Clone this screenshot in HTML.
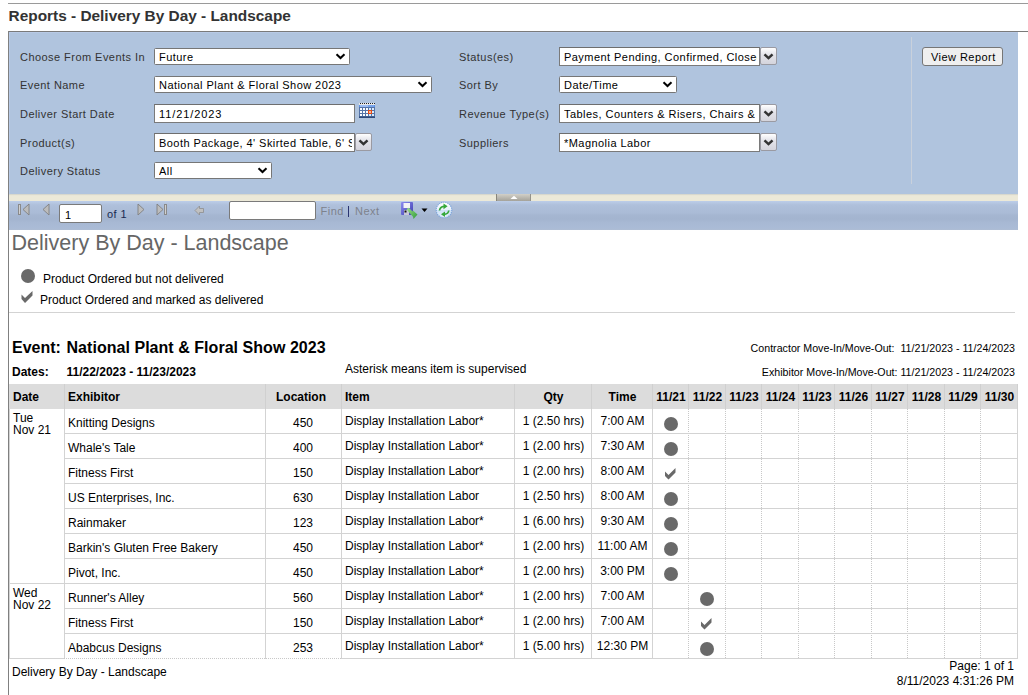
<!DOCTYPE html>
<html><head><meta charset="utf-8">
<style>
*{box-sizing:border-box;margin:0;padding:0}
html,body{width:1028px;height:695px;overflow:hidden;background:#fff}
body{position:relative;font-family:"Liberation Sans",sans-serif;color:#000}
.a{position:absolute}
.t{position:absolute;white-space:nowrap;line-height:1}
.lbl{font-size:11px;color:#333;letter-spacing:0.45px}
.sel{position:absolute;background:#fff;border:1px solid #767676;border-radius:1.5px}
.sel span{position:absolute;left:4px;top:2px;font-size:11px;letter-spacing:0.45px;line-height:13px;color:#000;white-space:nowrap;overflow:hidden}
.chev{position:absolute;width:11px;height:7px}
.inp{position:absolute;background:#fff;border:1px solid #7a7a7a;border-top-color:#6e6e6e}
.inp span{position:absolute;left:4px;top:3px;font-size:11px;letter-spacing:0.45px;line-height:13px;color:#000;white-space:nowrap;overflow:hidden}
.ddb{position:absolute;width:17px;height:18px;border:1px solid #9a9aa2;border-radius:2px;background:linear-gradient(#fff,#e4e4ea 40%,#d4d4dc)}
.r{font-size:12px}
.hdr{position:absolute;top:384px;height:24px;background:#dcdcdc}
</style></head>
<body>
<!-- top line -->
<div class="a" style="left:8px;top:3px;width:1020px;height:1px;background:#9a9a9a"></div>
<div class="t" style="left:8.6px;top:7.5px;font-size:15.4px;font-weight:bold;color:#333;letter-spacing:0px">Reports - Delivery By Day - Landscape</div>

<!-- outer frame -->
<div class="a" style="left:8px;top:31px;width:1020px;height:1px;background:#7a7a7a"></div>
<div class="a" style="left:8px;top:31px;width:1px;height:664px;background:#808080"></div>

<!-- parameter panel -->
<div class="a" style="left:9px;top:32px;width:1009px;height:162px;background:#b0c4de"></div>
<div class="a" style="left:911px;top:37px;width:1px;height:147px;background:#c9d1dc"></div>
<div class="a" style="left:9px;top:32px;width:1009px;height:1px;background:#b8cae6"></div>
<div class="a" style="left:9px;top:32px;width:1px;height:162px;background:#b8cae6"></div>

<!-- left labels -->
<div class="t lbl" style="left:20px;top:52px">Choose From Events In</div>
<div class="t lbl" style="left:20px;top:80px">Event Name</div>
<div class="t lbl" style="left:20px;top:109px">Deliver Start Date</div>
<div class="t lbl" style="left:20px;top:138px">Product(s)</div>
<div class="t lbl" style="left:20px;top:166px">Delivery Status</div>

<!-- right labels -->
<div class="t lbl" style="left:459px;top:52px">Status(es)</div>
<div class="t lbl" style="left:459px;top:80px">Sort By</div>
<div class="t lbl" style="left:459px;top:109px">Revenue Type(s)</div>
<div class="t lbl" style="left:459px;top:138px">Suppliers</div>

<!-- left controls -->
<div class="sel" style="left:154px;top:48px;width:196px;height:17px"><span>Future</span>
<svg class="chev" style="left:180px;top:4px" viewBox="0 0 11 7"><path d="M1.5 1.2 L5.5 5 L9.5 1.2" fill="none" stroke="#000" stroke-width="2"/></svg></div>
<div class="sel" style="left:154px;top:76px;width:278px;height:17px"><span>National Plant &amp; Floral Show 2023</span>
<svg class="chev" style="left:262px;top:4px" viewBox="0 0 11 7"><path d="M1.5 1.2 L5.5 5 L9.5 1.2" fill="none" stroke="#000" stroke-width="2"/></svg></div>
<div class="inp" style="left:154px;top:104px;width:201px;height:19px"><span style="letter-spacing:0.9px">11/21/2023</span></div>
<svg class="a" style="left:359px;top:103px" width="16" height="15" viewBox="0 0 16 15">
<rect x="0" y="0" width="16" height="2" fill="#e8e8e8"/>
<path d="M1 0.5h1M3 0.5h1M5 0.5h1M7 0.5h1M9 0.5h1M11 0.5h1M13 0.5h1M15 0.5h1" stroke="#222" stroke-width="1.1"/>
<rect x="0" y="2" width="16" height="13" fill="#5574a8"/>
<rect x="0" y="2" width="16" height="2" fill="#5d92e6"/>
<rect x="1" y="2.5" width="8" height="1" fill="#d8e6ff"/>
<rect x="9" y="2.5" width="6" height="1" fill="#8fb4f0"/>
<g fill="#fbfdff"><rect x="1" y="5" width="2" height="2"/><rect x="4" y="5" width="2" height="2"/><rect x="7" y="5" width="2" height="2"/>
<rect x="1" y="8" width="2" height="2"/><rect x="4" y="8" width="2" height="2"/><rect x="7" y="8" width="2" height="2"/>
<rect x="1" y="11" width="2" height="2"/><rect x="4" y="11" width="2" height="2"/><rect x="7" y="11" width="2" height="2"/></g>
<g fill="#dbeafa"><rect x="10" y="5" width="2" height="2"/><rect x="13" y="5" width="2" height="2"/><rect x="13" y="8" width="2" height="2"/>
<rect x="10" y="11" width="2" height="2"/><rect x="13" y="11" width="2" height="2"/></g>
<rect x="9.6" y="7.6" width="2.8" height="2.8" fill="#eef6ff" stroke="#e84a10" stroke-width="1.2"/>
<rect x="0" y="13.5" width="16" height="1.5" fill="#2f4a7a"/>
</svg>
<div class="inp" style="left:154px;top:133px;width:201px;height:19px"><span style="width:193px">Booth Package, 4' Skirted Table, 6' S</span></div>
<div class="ddb" style="left:355px;top:133px"><svg class="chev" style="left:2px;top:5px" viewBox="0 0 11 7"><path d="M1.5 1.3 L5.5 5.1 L9.5 1.3" fill="none" stroke="#333" stroke-width="2.5"/></svg></div>
<div class="sel" style="left:154px;top:162px;width:118px;height:17px"><span>All</span>
<svg class="chev" style="left:102px;top:4px" viewBox="0 0 11 7"><path d="M1.5 1.2 L5.5 5 L9.5 1.2" fill="none" stroke="#000" stroke-width="2"/></svg></div>

<!-- right controls -->
<div class="inp" style="left:559px;top:47px;width:201px;height:19px"><span style="width:193px">Payment Pending, Confirmed, Closed</span></div>
<div class="ddb" style="left:760px;top:47px"><svg class="chev" style="left:2px;top:5px" viewBox="0 0 11 7"><path d="M1.5 1.3 L5.5 5.1 L9.5 1.3" fill="none" stroke="#333" stroke-width="2.5"/></svg></div>
<div class="sel" style="left:559px;top:76px;width:118px;height:17px"><span>Date/Time</span>
<svg class="chev" style="left:102px;top:4px" viewBox="0 0 11 7"><path d="M1.5 1.2 L5.5 5 L9.5 1.2" fill="none" stroke="#000" stroke-width="2"/></svg></div>
<div class="inp" style="left:559px;top:104px;width:201px;height:19px"><span>Tables, Counters &amp; Risers, Chairs &amp;</span></div>
<div class="ddb" style="left:760px;top:104px"><svg class="chev" style="left:2px;top:5px" viewBox="0 0 11 7"><path d="M1.5 1.3 L5.5 5.1 L9.5 1.3" fill="none" stroke="#333" stroke-width="2.5"/></svg></div>
<div class="inp" style="left:559px;top:133px;width:201px;height:19px"><span>*Magnolia Labor</span></div>
<div class="ddb" style="left:760px;top:133px"><svg class="chev" style="left:2px;top:5px" viewBox="0 0 11 7"><path d="M1.5 1.3 L5.5 5.1 L9.5 1.3" fill="none" stroke="#333" stroke-width="2.5"/></svg></div>

<!-- View report button -->
<div class="a" style="left:922px;top:47px;width:81px;height:19px;background:#efefef;border:1px solid #767676;border-radius:3px"></div>
<div class="t" style="left:931px;top:52px;font-size:11px;letter-spacing:0.45px;color:#000">View Report</div>

<!-- splitter strip -->
<div class="a" style="left:9px;top:194px;width:1009px;height:7px;background:linear-gradient(#c9ccc6 0px,#e6e4d6 1px,#ece9d8 2px)"></div>
<div class="a" style="left:496px;top:194px;width:35px;height:7px;background:linear-gradient(#d2d0c8,#a4a29a);border-left:1px solid #88867c;border-right:1px solid #94928a"></div>
<svg class="a" style="left:510px;top:195px" width="8" height="5"><path d="M0.5 4 L4 0.8 L7.5 4Z" fill="#fff"/></svg>

<!-- toolbar -->
<div class="a" style="left:9px;top:201px;width:1009px;height:29px;background:linear-gradient(#bdcee9 0px,#b6c7e2 2px,#afc0db 4px,#acbdd8 8px,#aabbd6 12px,#a5b6d1 14px,#a3b4cf 18px,#a7b8d3 21px,#aabbd6 27px,#aebdd4 29px)"></div>


<!-- toolbar icons -->
<svg class="a" style="left:17px;top:203px" width="14" height="13" viewBox="0 0 14 13">
<rect x="1" y="1" width="3" height="11" fill="#8a8a8a"/><rect x="2" y="2" width="1" height="9" fill="#d0d0d0"/>
<path d="M12 1 L6 6.5 L12 12Z" fill="#bcbcbc" stroke="#808080" stroke-width="0.9"/>
</svg>
<svg class="a" style="left:41px;top:203px" width="10" height="13" viewBox="0 0 10 13">
<path d="M8 1 L2 6.5 L8 12Z" fill="#bcbcbc" stroke="#808080" stroke-width="0.9"/>
</svg>
<div class="inp" style="left:59px;top:204px;width:43px;height:19px;border-color:#7a7a7a;border-radius:2px"><span style="left:5px;top:4px;font-size:11px;letter-spacing:0">1</span></div>
<div class="t" style="left:107px;top:209px;font-size:11px;letter-spacing:0.45px;color:#1a2a50">of 1</div>
<svg class="a" style="left:136px;top:203px" width="10" height="13" viewBox="0 0 10 13">
<path d="M2 1 L8 6.5 L2 12Z" fill="#bcbcbc" stroke="#808080" stroke-width="0.9"/>
</svg>
<svg class="a" style="left:155px;top:203px" width="14" height="13" viewBox="0 0 14 13">
<path d="M2 1 L8 6.5 L2 12Z" fill="#bcbcbc" stroke="#808080" stroke-width="0.9"/>
<rect x="9" y="1" width="3" height="11" fill="#8a8a8a"/><rect x="10" y="2" width="1" height="9" fill="#d0d0d0"/>
</svg>
<svg class="a" style="left:194px;top:204px" width="11" height="13" viewBox="0 0 11 13">
<path d="M1 6.5 L5.5 2 L5.5 4.5 L9.5 4.5 L9.5 8.5 L5.5 8.5 L5.5 11Z" fill="#c0c0c0" stroke="#8e8e8e" stroke-width="0.8"/>
</svg>
<div class="inp" style="left:229px;top:201px;width:87px;height:19px;border-color:#7a7a7a;border-radius:2px"></div>
<div class="t" style="left:320.5px;top:206px;font-size:11px;letter-spacing:0.5px;color:#7d828c">Find</div>
<div class="a" style="left:348px;top:206px;width:1px;height:11px;background:#2a3470"></div>
<div class="t" style="left:355px;top:206px;font-size:11px;letter-spacing:0.5px;color:#7d828c">Next</div>
<svg class="a" style="left:400px;top:201px" width="19" height="19" viewBox="0 0 19 19">
<defs><linearGradient id="fg" x1="0" y1="0" x2="1" y2="1"><stop offset="0" stop-color="#8c8cf0"/><stop offset="1" stop-color="#3e3eb0"/></linearGradient>
<linearGradient id="gg" x1="0" y1="0" x2="1" y2="1"><stop offset="0" stop-color="#9ee08a"/><stop offset="1" stop-color="#2f9a3a"/></linearGradient></defs>
<rect x="1" y="1" width="12" height="13" rx="1" fill="url(#fg)"/>
<rect x="3.5" y="2" width="6.5" height="5" fill="#f2f2f6"/>
<rect x="4" y="9" width="5" height="5" fill="#c8c8d8"/>
<rect x="4.5" y="9.5" width="2" height="2" fill="#111"/>
<path d="M6.5 8 L8.8 6.8 L12.5 10.5 L13 9.5 L17.5 13.5 L13.5 18 L13 15.8 L9.5 12 Z" fill="url(#gg)"/>
</svg>
<svg class="a" style="left:421px;top:208px" width="7" height="5" viewBox="0 0 7 5"><path d="M0.5 0.5 L6.5 0.5 L3.5 4Z" fill="#000"/></svg>
<svg class="a" style="left:435px;top:201px" width="19" height="19" viewBox="0 0 19 19">
<defs><linearGradient id="rg" x1="0" y1="0" x2="0" y2="1"><stop offset="0" stop-color="#fdfeff"/><stop offset="0.48" stop-color="#e8f1fc"/><stop offset="0.52" stop-color="#cfe2f7"/><stop offset="1" stop-color="#e3eefb"/></linearGradient></defs>
<circle cx="9" cy="9" r="7.8" fill="url(#rg)" stroke="#7aa3dc" stroke-width="1.1" stroke-dasharray="1.2 0.9"/>
<path d="M4.5 9.5 Q5 5.8 9 5.4" stroke="#35a83a" stroke-width="1.7" fill="none"/>
<path d="M8.5 2.6 L12.6 5.3 L8.5 8.2Z" fill="#35a83a"/>
<path d="M13.8 9.5 Q13.3 13 9.5 13.3" stroke="#35a83a" stroke-width="1.7" fill="none"/>
<path d="M10 10.5 L6 13.3 L10 16Z" fill="#35a83a"/>
</svg>
<!-- report -->
<div class="t" style="left:11.5px;top:233px;font-size:21.5px;color:#666">Delivery By Day - Landscape</div>
<div class="a" style="left:21px;top:269px;width:14px;height:14px;border-radius:50%;background:#696969"></div>
<div class="t r" style="left:43px;top:273px">Product Ordered but not delivered</div>
<svg class="a" style="left:20px;top:290px" width="14" height="14" viewBox="0 0 14 14"><path d="M1.5 4.5 L5 8 L12.5 1 L12.5 5.5 L5 13 L1.5 9Z" fill="#696969"/></svg>
<div class="t r" style="left:40px;top:294px">Product Ordered and marked as delivered</div>
<div class="a" style="left:9px;top:312px;width:1006px;height:1px;background:#d3d3d3"></div>
<div class="t" style="left:12px;top:340px;font-size:16px;font-weight:bold">Event:</div>
<div class="t" style="left:66.5px;top:340px;font-size:16px;font-weight:bold;letter-spacing:0.04px">National Plant &amp; Floral Show 2023</div>
<div class="t" style="left:12px;top:366px;font-size:12px;font-weight:bold">Dates:</div>
<div class="t" style="left:66.5px;top:366px;font-size:12px;font-weight:bold">11/22/2023 - 11/23/2023</div>
<div class="t r" style="left:345px;top:363px">Asterisk means item is supervised</div>
<div class="t" style="right:13px;top:343px;font-size:10.67px;white-space:pre">Contractor Move-In/Move-Out:  11/21/2023 - 11/24/2023</div>
<div class="t" style="right:13px;top:367px;font-size:10.67px;white-space:pre">Exhibitor Move-In/Move-Out: 11/21/2023 - 11/24/2023</div>
<div class="a" style="left:9px;top:384px;width:1009px;height:25px;background:#dcdcdc"></div>
<div class="a" style="left:64px;top:384px;width:1px;height:25px;background:#d0d0d0"></div>
<div class="a" style="left:265px;top:384px;width:1px;height:25px;background:#d0d0d0"></div>
<div class="a" style="left:341px;top:384px;width:1px;height:25px;background:#d0d0d0"></div>
<div class="a" style="left:514px;top:384px;width:1px;height:25px;background:#d0d0d0"></div>
<div class="a" style="left:591px;top:384px;width:1px;height:25px;background:#d0d0d0"></div>
<div class="a" style="left:652px;top:384px;width:1px;height:25px;background:#d0d0d0"></div>
<div class="a" style="left:688px;top:384px;width:1px;height:25px;background:#d0d0d0"></div>
<div class="a" style="left:725px;top:384px;width:1px;height:25px;background:#d0d0d0"></div>
<div class="a" style="left:761px;top:384px;width:1px;height:25px;background:#d0d0d0"></div>
<div class="a" style="left:798px;top:384px;width:1px;height:25px;background:#d0d0d0"></div>
<div class="a" style="left:834px;top:384px;width:1px;height:25px;background:#d0d0d0"></div>
<div class="a" style="left:871px;top:384px;width:1px;height:25px;background:#d0d0d0"></div>
<div class="a" style="left:907px;top:384px;width:1px;height:25px;background:#d0d0d0"></div>
<div class="a" style="left:944px;top:384px;width:1px;height:25px;background:#d0d0d0"></div>
<div class="a" style="left:980px;top:384px;width:1px;height:25px;background:#d0d0d0"></div>
<div class="a" style="left:1017px;top:384px;width:1px;height:25px;background:#d0d0d0"></div>
<div class="t" style="left:13px;top:391px;font-size:12px;font-weight:bold">Date</div>
<div class="t" style="left:68px;top:391px;font-size:12px;font-weight:bold">Exhibitor</div>
<div class="t" style="left:263px;width:76px;text-align:center;top:391px;font-size:12px;font-weight:bold">Location</div>
<div class="t" style="left:345px;top:391px;font-size:12px;font-weight:bold">Item</div>
<div class="t" style="left:515px;width:77px;text-align:center;top:391px;font-size:12px;font-weight:bold">Qty</div>
<div class="t" style="left:592px;width:61px;text-align:center;top:391px;font-size:12px;font-weight:bold">Time</div>
<div class="t" style="left:653px;width:36px;text-align:center;top:391px;font-size:12px;font-weight:bold">11/21</div>
<div class="t" style="left:689px;width:37px;text-align:center;top:391px;font-size:12px;font-weight:bold">11/22</div>
<div class="t" style="left:726px;width:36px;text-align:center;top:391px;font-size:12px;font-weight:bold">11/23</div>
<div class="t" style="left:762px;width:37px;text-align:center;top:391px;font-size:12px;font-weight:bold">11/24</div>
<div class="t" style="left:799px;width:36px;text-align:center;top:391px;font-size:12px;font-weight:bold">11/23</div>
<div class="t" style="left:835px;width:37px;text-align:center;top:391px;font-size:12px;font-weight:bold">11/26</div>
<div class="t" style="left:872px;width:36px;text-align:center;top:391px;font-size:12px;font-weight:bold">11/27</div>
<div class="t" style="left:908px;width:37px;text-align:center;top:391px;font-size:12px;font-weight:bold">11/28</div>
<div class="t" style="left:945px;width:36px;text-align:center;top:391px;font-size:12px;font-weight:bold">11/29</div>
<div class="t" style="left:981px;width:37px;text-align:center;top:391px;font-size:12px;font-weight:bold">11/30</div>
<div class="a" style="left:64px;top:409px;width:1px;height:250px;background:#d3d3d3"></div>
<div class="a" style="left:265px;top:409px;width:1px;height:250px;background:#d3d3d3"></div>
<div class="a" style="left:341px;top:409px;width:1px;height:250px;background:#d3d3d3"></div>
<div class="a" style="left:514px;top:409px;width:1px;height:250px;background:#d3d3d3"></div>
<div class="a" style="left:591px;top:409px;width:1px;height:250px;background:#d3d3d3"></div>
<div class="a" style="left:652px;top:409px;width:1px;height:250px;background:#d3d3d3"></div>
<div class="a" style="left:1017px;top:409px;width:1px;height:250px;background:#d3d3d3"></div>
<div class="a" style="left:688px;top:409px;width:1px;height:250px;background-image:linear-gradient(#c8c8c8 50%,transparent 50%);background-size:1px 2px"></div>
<div class="a" style="left:725px;top:409px;width:1px;height:250px;background-image:linear-gradient(#c8c8c8 50%,transparent 50%);background-size:1px 2px"></div>
<div class="a" style="left:761px;top:409px;width:1px;height:250px;background-image:linear-gradient(#c8c8c8 50%,transparent 50%);background-size:1px 2px"></div>
<div class="a" style="left:798px;top:409px;width:1px;height:250px;background-image:linear-gradient(#c8c8c8 50%,transparent 50%);background-size:1px 2px"></div>
<div class="a" style="left:834px;top:409px;width:1px;height:250px;background-image:linear-gradient(#c8c8c8 50%,transparent 50%);background-size:1px 2px"></div>
<div class="a" style="left:871px;top:409px;width:1px;height:250px;background-image:linear-gradient(#c8c8c8 50%,transparent 50%);background-size:1px 2px"></div>
<div class="a" style="left:907px;top:409px;width:1px;height:250px;background-image:linear-gradient(#c8c8c8 50%,transparent 50%);background-size:1px 2px"></div>
<div class="a" style="left:944px;top:409px;width:1px;height:250px;background-image:linear-gradient(#c8c8c8 50%,transparent 50%);background-size:1px 2px"></div>
<div class="a" style="left:980px;top:409px;width:1px;height:250px;background-image:linear-gradient(#c8c8c8 50%,transparent 50%);background-size:1px 2px"></div>
<div class="a" style="left:64px;top:433px;width:954px;height:1px;background:#d3d3d3"></div>
<div class="a" style="left:64px;top:458px;width:954px;height:1px;background:#d3d3d3"></div>
<div class="a" style="left:64px;top:483px;width:954px;height:1px;background:#d3d3d3"></div>
<div class="a" style="left:64px;top:508px;width:954px;height:1px;background:#d3d3d3"></div>
<div class="a" style="left:64px;top:533px;width:954px;height:1px;background:#d3d3d3"></div>
<div class="a" style="left:64px;top:558px;width:954px;height:1px;background:#d3d3d3"></div>
<div class="a" style="left:9px;top:583px;width:1009px;height:1px;background:#d3d3d3"></div>
<div class="a" style="left:64px;top:608px;width:954px;height:1px;background:#d3d3d3"></div>
<div class="a" style="left:64px;top:633px;width:954px;height:1px;background:#d3d3d3"></div>
<div class="a" style="left:9px;top:658px;width:55px;height:1px;background:#d3d3d3"></div>
<div class="a" style="left:64px;top:658px;width:277px;height:1px;background-image:linear-gradient(90deg,#c8c8c8 50%,transparent 50%);background-size:2px 1px"></div>
<div class="a" style="left:341px;top:658px;width:677px;height:1px;background:#d3d3d3"></div>
<div class="t r" style="left:13px;top:412px;line-height:12px">Tue<br>Nov 21</div>
<div class="t r" style="left:13px;top:587px;line-height:12px">Wed<br>Nov 22</div>
<div class="t r" style="left:68px;top:417px">Knitting Designs</div>
<div class="t r" style="left:265px;width:76px;text-align:center;top:417px">450</div>
<div class="t r" style="left:345px;top:415px">Display Installation Labor*</div>
<div class="t r" style="left:515px;width:77px;text-align:center;top:415px">1 (2.50 hrs)</div>
<div class="t r" style="left:592px;width:61px;text-align:center;top:415px">7:00 AM</div>
<div class="a" style="left:664px;top:417px;width:14px;height:14px;border-radius:50%;background:#696969"></div>
<div class="t r" style="left:68px;top:442px">Whale's Tale</div>
<div class="t r" style="left:265px;width:76px;text-align:center;top:442px">400</div>
<div class="t r" style="left:345px;top:440px">Display Installation Labor*</div>
<div class="t r" style="left:515px;width:77px;text-align:center;top:440px">1 (2.00 hrs)</div>
<div class="t r" style="left:592px;width:61px;text-align:center;top:440px">7:30 AM</div>
<div class="a" style="left:664px;top:442px;width:14px;height:14px;border-radius:50%;background:#696969"></div>
<div class="t r" style="left:68px;top:467px">Fitness First</div>
<div class="t r" style="left:265px;width:76px;text-align:center;top:467px">150</div>
<div class="t r" style="left:345px;top:465px">Display Installation Labor*</div>
<div class="t r" style="left:515px;width:77px;text-align:center;top:465px">1 (2.00 hrs)</div>
<div class="t r" style="left:592px;width:61px;text-align:center;top:465px">8:00 AM</div>
<svg class="a" style="left:664px;top:468px" width="14" height="14" viewBox="0 0 14 14"><path d="M1 3.5 L4.5 7 L11.5 0 L11.5 4.5 L4.5 11.5 L1 8Z" fill="#696969"/></svg>
<div class="t r" style="left:68px;top:492px">US Enterprises, Inc.</div>
<div class="t r" style="left:265px;width:76px;text-align:center;top:492px">630</div>
<div class="t r" style="left:345px;top:490px">Display Installation Labor</div>
<div class="t r" style="left:515px;width:77px;text-align:center;top:490px">1 (2.50 hrs)</div>
<div class="t r" style="left:592px;width:61px;text-align:center;top:490px">8:00 AM</div>
<div class="a" style="left:664px;top:492px;width:14px;height:14px;border-radius:50%;background:#696969"></div>
<div class="t r" style="left:68px;top:517px">Rainmaker</div>
<div class="t r" style="left:265px;width:76px;text-align:center;top:517px">123</div>
<div class="t r" style="left:345px;top:515px">Display Installation Labor*</div>
<div class="t r" style="left:515px;width:77px;text-align:center;top:515px">1 (6.00 hrs)</div>
<div class="t r" style="left:592px;width:61px;text-align:center;top:515px">9:30 AM</div>
<div class="a" style="left:664px;top:517px;width:14px;height:14px;border-radius:50%;background:#696969"></div>
<div class="t r" style="left:68px;top:542px">Barkin's Gluten Free Bakery</div>
<div class="t r" style="left:265px;width:76px;text-align:center;top:542px">450</div>
<div class="t r" style="left:345px;top:540px">Display Installation Labor*</div>
<div class="t r" style="left:515px;width:77px;text-align:center;top:540px">1 (2.00 hrs)</div>
<div class="t r" style="left:592px;width:61px;text-align:center;top:540px">11:00 AM</div>
<div class="a" style="left:664px;top:542px;width:14px;height:14px;border-radius:50%;background:#696969"></div>
<div class="t r" style="left:68px;top:567px">Pivot, Inc.</div>
<div class="t r" style="left:265px;width:76px;text-align:center;top:567px">450</div>
<div class="t r" style="left:345px;top:565px">Display Installation Labor*</div>
<div class="t r" style="left:515px;width:77px;text-align:center;top:565px">1 (2.00 hrs)</div>
<div class="t r" style="left:592px;width:61px;text-align:center;top:565px">3:00 PM</div>
<div class="a" style="left:664px;top:567px;width:14px;height:14px;border-radius:50%;background:#696969"></div>
<div class="t r" style="left:68px;top:592px">Runner's Alley</div>
<div class="t r" style="left:265px;width:76px;text-align:center;top:592px">560</div>
<div class="t r" style="left:345px;top:590px">Display Installation Labor*</div>
<div class="t r" style="left:515px;width:77px;text-align:center;top:590px">1 (2.00 hrs)</div>
<div class="t r" style="left:592px;width:61px;text-align:center;top:590px">7:00 AM</div>
<div class="a" style="left:700px;top:592px;width:14px;height:14px;border-radius:50%;background:#696969"></div>
<div class="t r" style="left:68px;top:617px">Fitness First</div>
<div class="t r" style="left:265px;width:76px;text-align:center;top:617px">150</div>
<div class="t r" style="left:345px;top:615px">Display Installation Labor*</div>
<div class="t r" style="left:515px;width:77px;text-align:center;top:615px">1 (2.00 hrs)</div>
<div class="t r" style="left:592px;width:61px;text-align:center;top:615px">7:00 AM</div>
<svg class="a" style="left:700px;top:618px" width="14" height="14" viewBox="0 0 14 14"><path d="M1 3.5 L4.5 7 L11.5 0 L11.5 4.5 L4.5 11.5 L1 8Z" fill="#696969"/></svg>
<div class="t r" style="left:68px;top:642px">Ababcus Designs</div>
<div class="t r" style="left:265px;width:76px;text-align:center;top:642px">253</div>
<div class="t r" style="left:345px;top:640px">Display Installation Labor*</div>
<div class="t r" style="left:515px;width:77px;text-align:center;top:640px">1 (5.00 hrs)</div>
<div class="t r" style="left:592px;width:61px;text-align:center;top:640px">12:30 PM</div>
<div class="a" style="left:700px;top:642px;width:14px;height:14px;border-radius:50%;background:#696969"></div>
<div class="t r" style="left:12px;top:666px">Delivery By Day - Landscape</div>
<div class="t r" style="right:14px;top:660px">Page: 1 of 1</div>
<div class="t r" style="right:14px;top:675px">8/11/2023 4:31:26 PM</div>
<div class="a" style="left:9px;top:409px;width:1px;height:250px;background:#d3d3d3"></div>
</body></html>
